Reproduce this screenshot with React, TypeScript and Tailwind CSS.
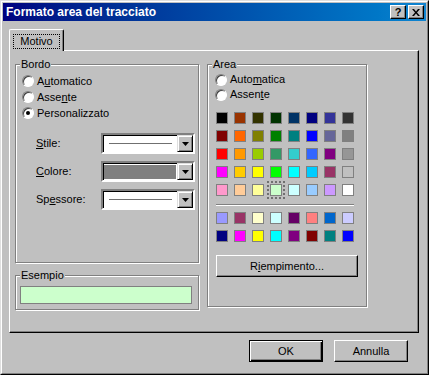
import React from 'react';

const basicColors = [
  ['#000000', '#993300', '#333300', '#003300', '#003366', '#000080', '#333399', '#333333'],
  ['#800000', '#ff6600', '#808000', '#008000', '#008080', '#0000ff', '#666699', '#808080'],
  ['#ff0000', '#ff9900', '#99cc00', '#339966', '#33cccc', '#3366ff', '#800080', '#969696'],
  ['#ff00ff', '#ffcc00', '#ffff00', '#00ff00', '#00ffff', '#00ccff', '#993366', '#c0c0c0'],
  ['#ff99cc', '#ffcc99', '#ffff99', '#ccffcc', '#ccffff', '#99ccff', '#cc99ff', '#ffffff'],
];

const chartColors = [
  ['#9999ff', '#993366', '#ffffcc', '#ccffff', '#660066', '#ff8080', '#0066cc', '#ccccff'],
  ['#000080', '#ff00ff', '#ffff00', '#00ffff', '#800080', '#800000', '#008080', '#0000ff'],
];

const Group: React.FC<{ label: string; className?: string; children?: React.ReactNode }> = ({ label, className, children }) => (
  <div className={'relative border border-[#808080] shadow-[inset_1px_1px_0_#fff,1px_1px_0_#fff] ' + (className ?? '')}>
    <span className="absolute -top-[7px] left-[4px] px-[1px] bg-[#c0c0c0] leading-[13px]">{label}</span>
    {children}
  </div>
);

const Radio: React.FC<{ checked?: boolean }> = ({ checked }) => (
  <span className="w-[12px] h-[12px] rounded-full bg-white border border-t-[#808080] border-l-[#808080] border-r-white border-b-white shadow-[inset_1px_1px_0_#404040] flex items-center justify-center">
    {checked && <span className="w-[4px] h-[4px] rounded-full bg-black" />}
  </span>
);

const Arrow = () => (
  <svg width="7" height="4" viewBox="0 0 7 4">
    <path d="M0 0h7L3.5 4z" fill="#000" />
  </svg>
);

const Combo: React.FC<{ children?: React.ReactNode }> = ({ children }) => (
  <div className="w-[94px] h-[21px] bg-white border-2 border-t-[#808080] border-l-[#808080] border-r-white border-b-white flex">
    <div className="flex-1 flex items-center shadow-[inset_1px_1px_0_#000]">{children}</div>
    <div className="w-[16px] h-[17px] bg-[#c0c0c0] border border-t-[#dfdfdf] border-l-[#dfdfdf] border-r-black border-b-black shadow-[inset_1px_1px_0_#fff,inset_-1px_-1px_0_#808080] flex items-center justify-center">
      <Arrow />
    </div>
  </div>
);

const Swatch: React.FC<{ color: string; selected?: boolean }> = ({ color, selected }) => (
  <span
    className={'w-[12px] h-[12px] border border-[#808080] ' + (selected ? 'outline-2 outline-dotted outline-[#707070] outline-offset-1' : '')}
    style={{ backgroundColor: color }}
  />
);

export default function App() {
  return (
    <div className="w-[429px] h-[375px] bg-[#c0c0c0] border border-t-[#dfdfdf] border-l-[#dfdfdf] border-r-black border-b-black font-['Liberation_Sans',Arial,sans-serif] text-[11px] text-black select-none">
      <div className="h-full border border-t-white border-l-white border-r-[#808080] border-b-[#808080] p-px flex flex-col">
        {/* title bar */}
        <div className="h-[18px] flex items-center bg-linear-to-r from-[#000080] to-[#1084d0] pl-[3px] pr-[2px]">
          <span className="text-white font-bold text-[12px]">Formato area del tracciato</span>
          <div className="ml-auto flex gap-[2px]">
            <button className="w-[16px] h-[14px] bg-[#c0c0c0] border border-t-white border-l-white border-r-black border-b-black shadow-[inset_-1px_-1px_0_#808080] flex items-center justify-center font-bold text-[11px] leading-none pt-px">
              ?
            </button>
            <button className="w-[16px] h-[14px] bg-[#c0c0c0] border border-t-white border-l-white border-r-black border-b-black shadow-[inset_-1px_-1px_0_#808080] flex items-center justify-center">
              <svg width="8" height="7" viewBox="0 0 8 7">
                <path d="M0 0h2l2 2.5L6 0h2L5 3.5 8 7H6L4 4.5 2 7H0l3-3.5z" fill="#000" />
              </svg>
            </button>
          </div>
        </div>

        {/* body */}
        <div className="flex-1 flex flex-col pl-[6px] pt-[8px]">
          <div className="relative z-10 -mb-px w-[55px] h-[22px] bg-[#c0c0c0] border-l border-t border-r border-l-white border-t-white border-r-black rounded-t-[2px] shadow-[inset_-1px_0_0_#808080] pt-[4px] pl-[3px]">
            <div className="w-[47px] h-[15px] border border-dotted border-black flex items-center justify-center leading-none">Motivo</div>
          </div>

          <div className="w-[410px] h-[283px] border border-t-white border-l-white border-r-black border-b-black shadow-[inset_-1px_-1px_0_#808080] flex pt-[13px] pl-[5px]">
            {/* left column */}
            <div className="flex flex-col gap-[12px] w-[184px]">
              <Group label="Bordo" className="h-[199px] pt-[8px] pl-[6px]">
                <div className="flex items-center gap-[3px] h-[16px]">
                  <Radio />
                  <span>A<u>u</u>tomatico</span>
                </div>
                <div className="flex items-center gap-[3px] h-[16px]">
                  <Radio />
                  <span>Asse<u>n</u>te</span>
                </div>
                <div className="flex items-center gap-[3px] h-[16px]">
                  <Radio checked />
                  <span>Personalizzato</span>
                </div>

                <div className="flex flex-col gap-[7px] mt-[12px]">
                  <div className="flex items-center">
                    <span className="ml-[14px] w-[65px]"><u>S</u>tile:</span>
                    <Combo>
                      <span className="ml-[6px] w-[63px] h-px bg-[#707070]" />
                    </Combo>
                  </div>
                  <div className="flex items-center">
                    <span className="ml-[14px] w-[65px]"><u>C</u>olore:</span>
                    <Combo>
                      <span className="mx-[1px] w-full h-[14px] bg-[#808080]" />
                    </Combo>
                  </div>
                  <div className="flex items-center">
                    <span className="ml-[14px] w-[65px]">Sp<u>e</u>ssore:</span>
                    <Combo>
                      <span className="ml-[6px] w-[63px] h-px bg-[#707070]" />
                    </Combo>
                  </div>
                </div>
              </Group>

              <Group label="Esempio" className="h-[35px] pt-[10px] pl-[4px]">
                <div className="w-[172px] h-[18px] border border-[#808080] bg-[#ccffcc]" />
              </Group>
            </div>

            {/* right column */}
            <Group label="Area" className="ml-[8px] w-[160px] h-[243px] pt-[7px] pl-[7px]">
              <div className="flex items-center gap-[3px] h-[15px]">
                <Radio />
                <span>Auto<u>m</u>atica</span>
              </div>
              <div className="flex items-center gap-[3px] h-[15px]">
                <Radio />
                <span>Assen<u>t</u>e</span>
              </div>

              <div className="ml-[1px] mt-[10px] w-[138px]">
                <div className="grid grid-cols-8 gap-[6px]">
                  {basicColors.flat().map((c, i) => (
                    <Swatch key={i} color={c} selected={i === 35} />
                  ))}
                </div>
                <div className="mt-[8px] h-[2px] border-t border-t-[#808080] border-b border-b-white" />
                <div className="grid grid-cols-8 gap-[6px] mt-[6px]">
                  {chartColors.flat().map((c, i) => (
                    <Swatch key={i} color={c} />
                  ))}
                </div>
              </div>

              <button className="ml-[1px] mt-[13px] w-[142px] h-[22px] bg-[#c0c0c0] border border-t-white border-l-white border-r-black border-b-black shadow-[inset_-1px_-1px_0_#808080] flex items-center justify-center">
                <span>R<u>i</u>empimento...</span>
              </button>
            </Group>
          </div>

          {/* footer buttons */}
          <div className="mt-[7px] flex justify-end gap-[11px] pr-[18px]">
            <button className="w-[74px] h-[22px] bg-[#c0c0c0] border border-black shadow-[inset_1px_1px_0_#fff,inset_-1px_-1px_0_#000,inset_-2px_-2px_0_#808080] flex items-center justify-center">
              OK
            </button>
            <button className="w-[74px] h-[22px] bg-[#c0c0c0] border border-t-white border-l-white border-r-black border-b-black shadow-[inset_-1px_-1px_0_#808080] flex items-center justify-center">
              Annulla
            </button>
          </div>
        </div>
      </div>
    </div>
  );
}
